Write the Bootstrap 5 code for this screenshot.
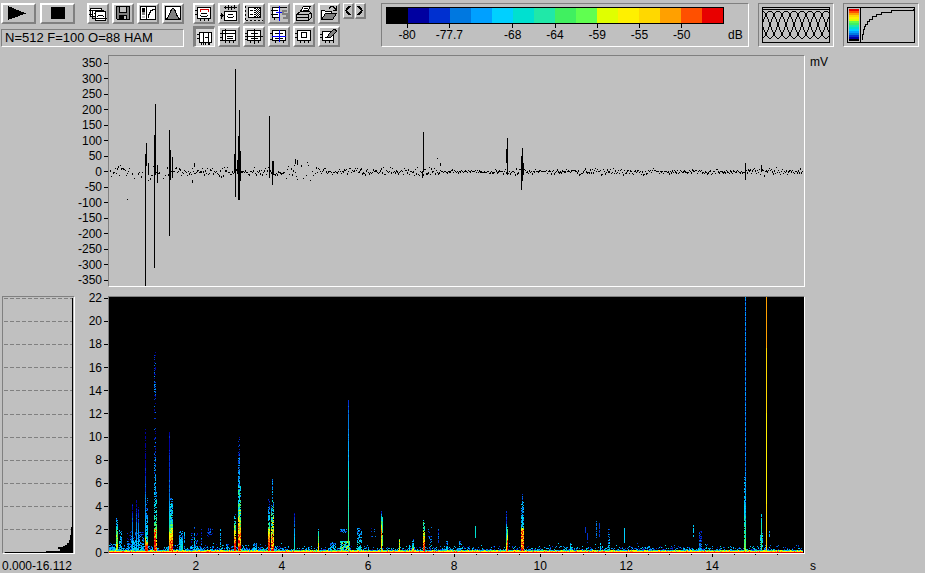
<!DOCTYPE html>
<html lang="en">
<head>
<meta charset="utf-8">
<meta name="viewport" content="width=device-width, initial-scale=1">
<title>Sound analysis</title>
<link href="https://cdn.jsdelivr.net/npm/bootstrap@5.3.0/dist/css/bootstrap.min.css" rel="stylesheet">
<style>
  :root { --face: #c0c0c0; --shade: #808080; }
  body { background: var(--face); color: #000; font: 12px/14px "Liberation Sans", Arial, sans-serif; }
  svg { display: block; shape-rendering: crispEdges; }
  ol { list-style: none; }
  .topbar { padding: 3px 6px 8px 1px; }
  .tool { width: 22px; height: 21px; padding: 0; border: 2px solid; border-color: #fff var(--shade) var(--shade) #fff; border-radius: 0; background: var(--face); }
  .tool:hover { background: var(--face); border-color: #fff var(--shade) var(--shade) #fff; }
  .tool.pressed, .tool.pressed:hover { border-color: var(--shade) #fff #fff var(--shade); border-width: 3px 1px 1px 3px; background: #d8d8d8; }
  .wide { width: 35px; }
  .nudge { width: 11px; height: 16px; border-width: 1px 2px 2px 1px; }
  .tool svg { fill: none; stroke: #000; }
  .sunken { border: 1px solid; border-color: var(--shade) #fff #fff var(--shade); }
  .gap-tools { gap: 3px; }
  .gap-nudge { gap: 1px; }
  .gap-rows { gap: 2px; }
  .spaced { margin-left: 9px; }
  .status { height: 18px; font-size: 13px; line-height: 16px; padding: 0 3px; margin-top: 5px; }
  .scale-panel { margin-left: 15px; padding: 3px 4px; }
  .scale-grid { display: grid; grid-template-columns: repeat(16, 1fr); }
  .swatches { height: 17px; border: 1px solid #000; }
  .scale-labels span { grid-row: 1; grid-column-end: span 2; text-align: center; }
  .scale-labels span::before { content: ""; display: block; width: 1px; height: 4px; margin: 0 auto; background: #000; }
  .unit { width: 20px; padding: 21px 0 0 4px; }
  .preview { width: 76px; padding: 3px; }
  .workspace { display: grid; grid-template-columns: 75px 33px 1fr 120px; grid-template-rows: 232fr 9px 258fr 19px; }
  .workspace > * { min-width: 0; min-height: 0; }
  .wave-axis { grid-area: 1 / 2; padding-top: 1px; margin-left: -8px; }
  .wave-plot { grid-area: 1 / 3; }
  .wave-unit { grid-area: 1 / 4; padding-left: 5px; }
  .mean-plot { grid-area: 3 / 1; margin-left: 2px; }
  .freq-axis { grid-area: 3 / 2; margin-top: -5px; margin-bottom: -6px; }
  .spec-plot { grid-area: 3 / 3; background: #000; }
  .range { grid-area: 4 / 1; padding: 5px 0 0 2px; }
  .time-axis { grid-area: 4 / 3; padding: 0 1px; }
  .time-axis ol { padding: 2px 0 0; margin: 0 0 0 6.3%; }
  .time-axis li { width: 13.22%; text-align: center; flex: none; }
  .time-unit { grid-area: 4 / 4; padding: 5px 0 0 5px; }
  .axis li { display: flex; justify-content: flex-end; align-items: center; gap: 2px; }
  .axis li::after { content: ""; width: 4px; height: 1px; background: #000; }
  .axis { padding-left: 0; }
  .plot { position: relative; }
  .plot svg { position: absolute; inset: 0; width: 100%; height: 100%; }
</style>
<script src="https://cdn.jsdelivr.net/npm/bootstrap@5.3.0/dist/js/bootstrap.bundle.min.js"></script>
</head>
<body class="d-flex flex-column min-vh-100">

<header class="topbar d-flex align-items-stretch">
  <div class="d-flex flex-column">
    <div class="d-flex">
      <button class="btn tool wide" aria-label="Play"><svg width="31" height="17"><path d="M5 1L23 8.500L5 15Z" fill="#000" stroke="none"/></svg></button>
      <button class="btn tool wide ms-1" aria-label="Stop"><svg width="31" height="17"><path d="M9 2h14v12H9z" fill="#000" stroke="none"/></svg></button>
      <div class="d-flex gap-tools ms-2 ps-1">
        <button class="btn tool" aria-label="Windows"><svg width="18" height="17"><path d="M1.500 3.500h11v8h-11z" fill="#fff"/><path d="M0 5.500h3M0 9.500h3M3.500 5.500h11v8h-11z" /><path d="M6.500 6.500h10v9h-10z" fill="#fff"/><path d="M5 8.500h2M5 13.500h13M9 10.500h5M8.500 11v1M14.500 11v1M9 13.500h5"/></svg></button>
        <button class="btn tool" aria-label="Save"><svg width="18" height="17"><path d="M2.500 1.500h13v13h-12l-1-1z" fill="#808080"/><path d="M5.500 1.500h7v6h-7z" fill="#c0c0c0"/><path d="M5 10h8v5H5z" fill="#000" stroke="none"/><path d="M10 11h2v3h-2z" fill="#c0c0c0" stroke="none"/></svg></button>
        <button class="btn tool" aria-label="Colour transfer"><svg width="18" height="17"><path d="M1.500 1.500h15v13h-15z" fill="#fff"/><path d="M3 3h3v4H3z" fill="#000" stroke="none"/><path d="M3 7h3v3H3z" fill="#808080" stroke="none"/><path d="M3 11h3v2H3z" fill="#c0c0c0" stroke="none"/><path d="M7.500 2v12M9.500 13V9.500H10.500V7.500H11.500V5.500H13.500V4.500H15.500"/></svg></button>
        <button class="btn tool" aria-label="Window function"><svg width="18" height="17"><path d="M1.500 1.500h15v13h-15z" fill="#fff"/><path d="M2.500 14C6 12 6 3.500 9 3.500S12 12 15.500 14z" fill="#808080"/></svg></button>
      </div>
    </div>
    <div class="sunken status">N=512 F=100 O=88 HAM</div>
  </div>

  <div class="d-flex flex-column gap-rows spaced">
    <div class="d-flex gap-tools">
      <button class="btn tool" aria-label="Spectrogram"><svg width="18" height="17"><path d="M2.500 2.500h13v11h-13z" fill="#fff"/><path d="M0 5.500h3M0 9.500h3M5.500 14v2M9.500 14v2M13.500 14v2M6 8.500h6M5.500 10v1M12.500 10v1M6 11.500h6"/><path d="M5 6.500V4.500h8v2" stroke="#d00000"/></svg></button>
      <button class="btn tool" aria-label="Wave and spectrogram"><svg width="18" height="17"><path d="M4.500 6.500h12v9h-12z" fill="#fff"/><path d="M4 2.500h13M5.500 1v3M8.500 0v5M11.500 1v4M14.500 0v4M1.500 8v6M0 10.500h5M2.500 9v3M8 9.500h5M7.500 11v1M13.500 11v1M8 12.500h5"/></svg></button>
      <button class="btn tool" aria-label="Select region"><svg width="18" height="17"><path d="M3.500 2.500h12v10h-12z" fill="#fff"/><path d="M9.500 3v10M10 3.500h6M10 5.500h6M10 7.500h6M10 9.500h6M10 11.500h6" stroke-dasharray="1 1"/><path d="M10 4.500h6M10 6.500h6M10 8.500h6M10 10.500h6" stroke-dasharray="1 1" stroke-dashoffset="1"/><path d="M5 5.500h3M5 9.500h3"/><path d="M.5 1v14M1 15.500h17" stroke-dasharray="2 2"/></svg></button>
      <button class="btn tool" aria-label="Synchronise"><svg width="18" height="17"><path d="M2.500 2.500h7v10h-7z" fill="#fff"/><path d="M1 5.500h7M1 9.500h7M4.500 12v3M3 12.500h7"/><path d="M9 2.500h8" /><path d="M16.500 5.500h-4v3h4v4h-4" stroke="#808080" stroke-width="2"/><path d="M9.500 1v15M6 7.500h6" stroke="#00f"/></svg></button>
      <button class="btn tool" aria-label="Print"><svg width="18" height="17"><path d="M5.500 6.500L8.500 1.500h7l-3 5z" fill="#fff"/><path d="M9 3.500h4M8 5.500h4"/><path d="M1.500 9.500l4-3h9l2 2v4l-3 3h-12z" fill="#c0c0c0"/><path d="M2 9.500h11v5M2 12.500h11M13.500 9.500l3-2"/></svg></button>
      <button class="btn tool" aria-label="Open"><svg width="18" height="17"><path d="M1.500 14V5.500h3l1 1h6v3" fill="#fff"/><path d="M1.500 14.500l4-6h11l-4 6z" fill="#808080"/><path d="M9 3.500l2-2h2l3 3M16.500 1v4h-4"/></svg></button>
      <div class="d-flex gap-nudge">
        <button class="btn tool nudge" aria-label="Previous"><svg width="8" height="13"><path d="M6 2L2 6.500L6 11" stroke-width="2"/></svg></button>
        <button class="btn tool nudge" aria-label="Next"><svg width="8" height="13"><path d="M2 2L6 6.500L2 11" stroke-width="2"/></svg></button>
      </div>
    </div>
    <div class="d-flex gap-tools">
      <button class="btn tool pressed" aria-label="Time cursors" aria-pressed="true"><svg width="18" height="17"><path d="M3.500 3.500h12v10h-12z" fill="#fff"/><path d="M1 5.500h3M1 9.500h3M5.500 13v3M9.500 13v3M13.500 13v3M7.500 3v13M12.500 3v13M9 8.500h3"/></svg></button>
      <button class="btn tool" aria-label="Frequency cursors"><svg width="18" height="17"><path d="M2.500 2.500h13v10h-13z" fill="#fff"/><path d="M0 5.500h16M0 9.500h3M0 12.500h16M5.500 1v14M9.500 13v2M13.500 13v2M7 8.500h6M7 10.500h6"/></svg></button>
      <button class="btn tool" aria-label="Cross cursor"><svg width="18" height="17"><path d="M2.500 2.500h13v10h-13z" fill="#fff"/><path d="M0 8.500h18M0 5.500h3M0 11.500h3M9.500 1v15M5.500 13v2M13.500 13v2M6 5.500h7M6 10.500h7"/></svg></button>
      <button class="btn tool" aria-label="Linked cross cursor"><svg width="18" height="17"><path d="M2.500 2.500h13v10h-13z" fill="#fff"/><path d="M0 5.500h3M0 11.500h3M5.500 13v2M13.500 13v2M5 5.500h8M5 10.500h8"/><path d="M2 8.500h14M9.500 2v12" stroke="#00f"/></svg></button>
      <button class="btn tool" aria-label="Frame"><svg width="18" height="17"><path d="M2.500 2.500h13v10h-13z" fill="#fff"/><path d="M0 5.500h3M0 9.500h3M5.500 13v2M9.500 13v2M13.500 13v2M6.500 4.500h5v5h-5z"/></svg></button>
      <button class="btn tool" aria-label="Pencil"><svg width="18" height="17"><path d="M2.500 3.500h11v9h-11z" fill="#fff"/><path d="M0 6.500h3M0 9.500h3M5.500 13v2M9.500 13v2M13.500 13v2M5 9.500h3"/><path d="M7.500 9.500l1-3 5-5h2l1 2-6 6z" fill="#808080"/></svg></button>
    </div>
  </div>

  <div class="sunken scale-panel d-flex flex-fill">
    <div class="flex-fill">
      <div class="scale-grid swatches" id="swatches"></div>
      <div class="scale-grid scale-labels" id="scaleLabels"></div>
    </div>
    <div class="unit">dB</div>
  </div>

  <div class="sunken preview spaced">
    <svg width="68" height="36" fill="none" stroke="#000"><path d="M.5.5h67v35H.5zM0 2.500h68"/><path id="bells"/></svg>
  </div>
  <div class="sunken preview spaced">
    <svg width="68" height="36" fill="none" stroke="#000"><g id="miniScale" stroke="none"></g><path d="M.5.500h67v35H.5zM13.500 0v36M15.500 33V27.500H16.500V22.500H17.500V19.500H18.500V17.500H20.500V14.500H22.500V12.500H25.500V9.500H29.500V7.500H34.500V5.500H44.500V3.500H66V2"/></svg>
  </div>
</header>

<main class="workspace flex-fill">
  <ol class="axis wave-axis d-flex flex-column justify-content-between mb-0" id="waveAxis"></ol>
  <div class="plot sunken wave-plot"><svg viewBox="0 0 695 230" preserveAspectRatio="none" role="img" aria-label="Waveform"><path id="wave" fill="#000"/></svg></div>
  <div class="wave-unit">mV</div>

  <div class="plot sunken mean-plot"><svg viewBox="0 0 71 256" preserveAspectRatio="none" role="img" aria-label="Mean spectrum"><path id="meanGrid" fill="none" stroke="#808080" stroke-dasharray="4 2"/><path d="M69 1h1v255H2v-1h41v-1h14v-2h-2v-2h5v-1h2v-1h2v-2h2v-3h1v-5h1v-8h1z"/></svg></div>
  <ol class="axis freq-axis d-flex flex-column justify-content-between" id="freqAxis"></ol>
  <div class="plot sunken spec-plot"><svg id="spec" viewBox="0 0 695 256" preserveAspectRatio="none" role="img" aria-label="Spectrogram"></svg></div>

  <div class="range">0.000-16.112</div>
  <div class="time-axis">
    <svg viewBox="0 0 695 3" width="100%" height="3" preserveAspectRatio="none"><path id="timeTicks"/></svg>
    <ol class="d-flex" id="timeAxis"></ol>
  </div>
  <div class="time-unit">s</div>
</main>

<script>
const $ = id => document.getElementById(id);
const palette = ['#000000','#0000a0','#0030d0','#0078e0','#00a0ff','#00d0ff','#00e0d0','#20e8a8','#40f060','#60ff50','#e0ff00','#fff000','#ffd800','#ffa000','#ff5000','#e80000'];
let seed = 7;
const rnd = () => (seed = (seed * 16807) % 2147483647) / 2147483647;

/* colour scale */
$('swatches').innerHTML = palette.map(c => `<div style="background:${c}"></div>`).join('');
$('scaleLabels').innerHTML = [[1,'-80'],[3,'-77.7'],[6,'-68'],[8,'-64'],[10,'-59'],[12,'-55'],[14,'-50']]
  .map(([c, t]) => `<span style="grid-column-start:${c}">${t}</span>`).join('');
$('miniScale').innerHTML = palette.map((c, i) => `<rect x="2" y="${32 - i * 2}" width="10" height="2" fill="${c}"/>`).join('');

/* overlapping analysis windows */
let bells = '';
for (let c = -16; c <= 88; c += 8) for (let x = -16; x <= 16; x++) {
  const X = c + x;
  if (X < 1 || X > 66) continue;
  const y = v => Math.round(30 - 13.5 * (1 + Math.cos(v / 16 * Math.PI))) + 1;
  const a = y(x), b = y(x + 1);
  bells += `M${X + .5} ${Math.min(a, b)}V${Math.max(a, b, Math.min(a, b) + 1)}`;
}
$('bells').setAttribute('d', bells);

/* axes */
const list = (from, to, step) => { let s = ''; for (let v = from; v >= to; v -= step) s += `<li>${v}</li>`; return s; };
$('waveAxis').innerHTML = list(350, -350, 50);
$('freqAxis').innerHTML = list(22, 0, 2);
$('timeAxis').innerHTML = [2,4,6,8,10,12,14].map(v => `<li>${v}</li>`).join('');
let ticks = '';
for (let i = 1; i < 32; i++) ticks += `M${Math.round(1 + i * 21.5)} 0h1v${i % 4 ? 1 : 3}h-1z`;
$('timeTicks').setAttribute('d', ticks);
let grid = '';
for (let i = 0; i < 12; i++) grid += `M1 ${Math.round(1 + i * 23.1) + .5}H69`;
$('meanGrid').setAttribute('d', grid);

/* waveform: noise floor by span, then peaks as [x, top, bottom] */
let wave = '';
const floor = [[0,36,9],[36,58,12],[58,176,5],[176,208,10],[208,300,4],[300,330,5],[330,390,2],[390,425,4],[425,470,2],[470,540,4],[540,640,3],[640,694,4]];
for (const [a, b, amp] of floor) for (let x = a; x < b; x++) {
  const off = Math.round((rnd() + rnd() - 1) * amp);
  if (amp > 7 && rnd() < .3) continue;
  wave += `M${x} ${115 + off}h1v${rnd() < .35 ? 2 : 1}h-1z`;
}
for (const [x, t, b] of [[36,98,230],[37,87,110],[39,107,119],[45,79,212],[46,48,119],[48,109,127],[60,74,180],[61,94,124],[63,101,122],[125,98,117],[126,13,141],[128,104,118],[129,80,144],[130,54,144],[131,95,125],[160,110,121],[160,60,122],[163,105,119],[163,105,129],[164,105,119],[18,143,144],[186,103,108],[188,104,109],[313,115,122],[314,76,116],[328,102,103],[331,107,110],[397,93,107],[398,82,119],[412,100,134],[413,92,125],[414,107,119],[636,107,124],[652,109,116],[85,107,111],[83,124,127]])
  wave += `M${x} ${t}h1V${b}h-1z`;
$('wave').setAttribute('d', wave);

/* spectrogram */
const cells = palette.map(() => '');
const dot = (x, y, level) => {
  const l = Math.max(0, Math.min(15, Math.round(level)));
  if (l > 0) cells[l] += `M${x} ${y}h1v1h-1z`;
};
/* column x, width, stops [y, level, density] from top to bottom */
const burst = (x, w, stops, jitter = 3) => {
  for (let s = 0; s < stops.length - 1; s++) {
    const [y0, l0, d0] = stops[s], [y1, l1, d1] = stops[s + 1];
    for (let y = y0; y < y1; y++) {
      const k = (y - y0) / (y1 - y0);
      for (let i = 0; i < w; i++) if (rnd() < d0 + (d1 - d0) * k) dot(x + i, y, l0 + (l1 - l0) * k + (rnd() - .5) * jitter);
    }
  }
};
/* floor noise */
for (let x = 0; x < 694; x++) {
  for (let y = 246; y < 253; y++) if (rnd() < Math.pow((y - 245) / 8, 2.5) * (x < 180 ? 1 : .6)) dot(x, y, 1 + rnd() * 5);
  dot(x, 253, 3 + rnd() * 8);
  dot(x, 254, rnd() < .5 ? 11 : 9 + rnd() * 5);
  dot(x, 255, 15);
}
burst(7, 2, [[221,3,.5],[235,8,1],[253,10,1]]);
burst(10, 3, [[232,3,.4],[253,5,.8]]);
burst(1, 6, [[246,3,.3],[253,5,.8]]);
burst(18, 5, [[234,1,.2],[253,4,.7]]);
for (const [x, t] of [[23,207],[27,203],[29,210]]) burst(x, 1, [[t,1,.8],[230,3,1],[253,5,1]], 1);
burst(23, 12, [[235,2,.3],[253,5,.8]]);
burst(36, 1, [[130,1,.3],[165,1,1],[200,3,1],[238,5,1],[243,13,1],[254,15,1]], 1);
burst(37, 2, [[200,2,.3],[243,6,.8],[248,15,1],[254,15,1]]);
burst(45, 2, [[55,1,.2],[90,3,.4],[120,1,.15],[160,3,.4],[200,4,.7]]);
burst(45, 3, [[195,4,.5],[215,6,.8],[230,8,.8],[254,13,.9]]);
burst(45, 2, [[232,14,.8],[254,15,1]]);
burst(60, 1, [[135,1,1],[180,2,1],[200,3,1],[225,6,1],[242,12,1],[254,15,1]], 1);
burst(61, 3, [[200,4,.6],[225,6,.9],[238,12,1],[254,15,1]], 5);
burst(70, 4, [[234,3,.4],[246,5,.9],[254,6,1]]);
burst(75, 1, [[234,4,.8],[246,4,.8]]);
burst(82, 7, [[236,1,.2],[253,4,.4]]);
burst(85, 1, [[229,2,.6],[254,6,1]]);
burst(92, 1, [[232,2,.4],[253,3,.7]]);
burst(98, 6, [[231,2,.4],[240,2,.3]]);
burst(111, 1, [[232,3,.7],[250,6,.8]]);
burst(117, 3, [[247,3,.6],[254,5,.9]]);
burst(125, 2, [[215,3,.3],[232,9,.9],[242,14,1],[254,15,1]], 5);
burst(129, 2, [[140,2,.5],[147,1,.1],[164,3,.8],[190,4,.9]]);
burst(129, 3, [[188,4,.5],[200,6,.8],[218,8,.9],[234,12,1],[254,15,1]], 6);
burst(144, 4, [[246,3,.5],[254,5,.9]]);
burst(159, 2, [[202,1,.5],[225,6,.8],[240,13,1],[254,15,1]]);
burst(163, 1, [[182,3,.6],[205,5,.8]]);
burst(162, 3, [[205,4,.5],[222,7,.8],[240,12,1],[254,15,1]], 7);
burst(185, 1, [[215,1,.8],[234,4,1],[254,7,1]], 1);
burst(209, 1, [[230,4,.8],[244,9,1],[254,11,1]]);
burst(221, 6, [[245,3,.5],[254,6,.8]]);
burst(231, 10, [[244,7,.7],[254,7,.7]], 6);
burst(231, 7, [[232,3,.6],[236,3,.4]]);
burst(239, 1, [[103,2,1],[150,4,1],[180,6,1],[225,7,1],[254,9,1]], 1);
burst(248, 5, [[230,3,.5],[240,4,.7],[246,5,.5],[254,6,.9]]);
burst(262, 5, [[231,2,.12],[240,2,.1]]);
burst(272, 1, [[212,1,.6],[222,6,1],[234,14,1],[246,11,1],[254,12,1]]);
burst(273, 1, [[220,6,.8],[250,9,.9]]);
burst(290, 1, [[242,9,1],[254,11,1]]);
burst(303, 2, [[242,3,.6],[250,6,.9],[254,15,1]]);
burst(314, 2, [[223,5,.4],[233,8,.9],[244,12,1],[248,15,1],[254,15,1]], 5);
burst(319, 4, [[230,2,.3],[248,3,.2]]);
burst(329, 1, [[232,2,.8],[246,3,.8]]);
burst(337, 2, [[244,3,.6],[254,5,.9]]);
burst(350, 2, [[244,3,.6],[254,5,.9]]);
burst(366, 1, [[229,6,.9],[241,6,1]], 1);
burst(397, 1, [[214,1,1],[232,4,1],[254,12,1]]);
burst(398, 1, [[230,6,.8],[242,12,1],[245,15,1],[254,15,1]]);
burst(413, 1, [[197,2,.8],[230,5,.9]]);
burst(412, 3, [[204,3,.4],[230,5,.8],[232,13,1],[254,14,1]], 5);
burst(461, 2, [[246,4,.7],[254,6,1]]);
for (const [x, a, b, l] of [[476,230,237,2],[478,236,246,2],[487,223,241,3],[490,226,240,2],[584,228,240,5],[660,233,240,4],[300,248,254,5],[491,246,254,5]]) burst(x, 1, [[a,l,.7],[b,l,.7]], 1);
burst(499, 2, [[232,2,.5],[254,5,.7]]);
burst(515, 1, [[231,5,1],[246,5,1]], 1);
burst(590, 3, [[234,1,.6],[254,4,.8]]);
for (let y = 0; y < 256; y++) dot(636, y, y % 5 < 4 ? 3 + rnd() * 1.5 : 1);
burst(635, 2, [[180,4,.4],[205,5,.8],[235,7,.9],[254,9,1]]);
burst(652, 1, [[217,5,.8],[230,6,1],[254,8,1]]);
burst(651, 3, [[236,4,.4],[254,6,.9]]);
burst(657, 1, [[0,13,1],[30,13,1],[70,12,1],[160,11,1],[254,12,1]], 0);
$('spec').innerHTML = cells.map((d, i) => d && `<path fill="${palette[i]}" d="${d}"/>`).join('');
</script>
</body>
</html>
